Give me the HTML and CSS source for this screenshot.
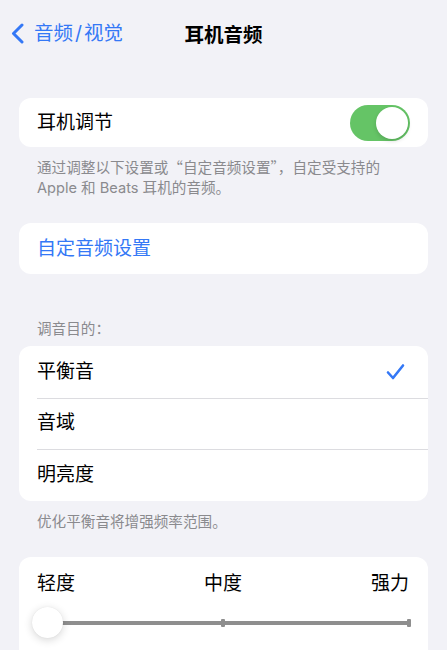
FILE: index.html
```html
<!DOCTYPE html>
<html lang="zh-CN">
<head>
<meta charset="utf-8">
<link rel="stylesheet" href="styles.css">
</head>
<body>
<div class="page">
  <header class="nav">
    <a class="back">
      <svg class="chev" width="15" height="21" viewBox="0 0 15 21"><path d="M12 2 L3.5 10.5 L12 19" fill="none" stroke="#3478f6" stroke-width="3" stroke-linecap="round" stroke-linejoin="round"/></svg>
      <span>音频<span class="slash">/</span>视觉</span>
    </a>
    <div class="title">耳机音频</div>
  </header>

  <section class="card card-toggle">
    <div class="row">
      <span class="label">耳机调节</span>
      <span class="switch"><span class="knob"></span></span>
    </div>
  </section>
  <p class="foot">通过调整以下设置或<span class="cjk">“</span>自定音频设置<span class="cjk">”</span>，自定受支持的<br>Apple 和 Beats 耳机的音频。</p>

  <section class="card card-link">
    <div class="row"><span class="label link">自定音频设置</span></div>
  </section>

  <p class="head">调音目的：</p>
  <section class="card list">
    <div class="row item">
      <span class="label">平衡音</span>
      <svg class="check" width="19" height="18" viewBox="0 0 19 18"><path d="M2 9.5 L7 15 L17 2.5" fill="none" stroke="#3478f6" stroke-width="2.6" stroke-linecap="round" stroke-linejoin="round"/></svg>
    </div>
    <div class="row item"><span class="label">音域</span></div>
    <div class="row item"><span class="label">明亮度</span></div>
  </section>
  <p class="foot foot2">优化平衡音将增强频率范围。</p>

  <section class="card slider-card">
    <div class="levels">
      <span>轻度</span><span>中度</span><span>强力</span>
    </div>
    <div class="slider">
      <div class="track">
        <span class="tick mid"></span>
        <span class="tick end"></span>
      </div>
      <span class="thumb"></span>
    </div>
  </section>
</div>
</body>
</html>
```

FILE: styles.css
```css
* { box-sizing: border-box; }
html, body {
  margin: 0;
  padding: 0;
  background: #f2f2f7;
}
body {
  font-family: "Inter", "Noto Sans CJK SC", sans-serif;
  color: #000;
  width: 447px;
  height: 650px;
  overflow: hidden;
}
.page {
  padding: 0 19px;
}
.nav {
  height: 66px;
  display: flex;
  align-items: center;
  position: relative;
  margin: 0 -19px;
  padding: 0 10px;
}
.back {
  display: flex;
  align-items: center;
  gap: 9px;
  color: #3478f6;
  font-size: 19.5px;
  line-height: 24px;
}
.slash { padding: 0 2px; }
.chev { display: block; margin-top: 1px; }
.title {
  position: absolute;
  left: 0;
  right: 0;
  top: 0;
  height: 66px;
  display: flex;
  align-items: center;
  justify-content: center;
  font-size: 19.5px;
  font-weight: 600;
  pointer-events: none;
}
.card {
  background: #fff;
  border-radius: 12px;
  overflow: hidden;
}
.card-toggle { margin-top: 32px; }
.row {
  display: flex;
  align-items: center;
  justify-content: space-between;
  padding: 0 18px 0 18px;
  height: 49px;
}
.label {
  font-size: 19px;
  line-height: 24px;
}
.link { color: #3478f6; }
.switch {
  width: 60px;
  height: 36px;
  border-radius: 18px;
  background: #65c466;
  display: flex;
  align-items: center;
  justify-content: flex-end;
  padding: 0 2px;
}
.knob {
  width: 32px;
  height: 32px;
  border-radius: 50%;
  background: #fff;
  box-shadow: 0 2px 4px rgba(0,0,0,0.15);
}
.foot {
  margin: 0;
  padding: 10px 18px 0 18px;
  font-size: 14.6px;
  line-height: 20px;
  color: #8a8a8e;
}
.cjk { font-family: "Noto Sans CJK SC", sans-serif; }
.card-link { margin-top: 25px; }
.card-link .row { height: 51px; }
.head {
  margin: 45px 0 0 0;
  padding: 0 18px;
  font-size: 14.6px;
  line-height: 20px;
  color: #8a8a8e;
}
.list { margin-top: 7px; }
.item {
  height: 51.5px;
  position: relative;
  padding-right: 23px;
}
.item + .item::before {
  content: "";
  position: absolute;
  top: 0;
  left: 18px;
  right: 0;
  height: 1px;
  background: #dcdce0;
}
.check { display: block; }
.foot2 { padding-top: 11px; }
.slider-card {
  margin-top: 25px;
  padding: 15px 17px 30px 18px;
  height: 120px;
}
.levels {
  display: flex;
  justify-content: space-between;
  padding-right: 2px;
  font-size: 19px;
  line-height: 24px;
}
.slider {
  position: relative;
  height: 32px;
  margin-top: 11px;
}
.track {
  position: absolute;
  left: 10px;
  right: 0;
  top: 14px;
  height: 4px;
  background: #8e8e8e;
}
.tick {
  position: absolute;
  top: -2px;
  width: 4px;
  height: 8px;
  background: #8e8e8e;
  border-radius: 1px;
}
.tick.mid { left: 174px; }
.tick.end { right: 0; }
.thumb {
  position: absolute;
  left: -5px;
  top: 0;
  width: 31px;
  height: 31px;
  border-radius: 50%;
  background: #fff;
  box-shadow: 0 2px 8px rgba(0,0,0,0.16), 0 0 1px rgba(0,0,0,0.1);
}
```
